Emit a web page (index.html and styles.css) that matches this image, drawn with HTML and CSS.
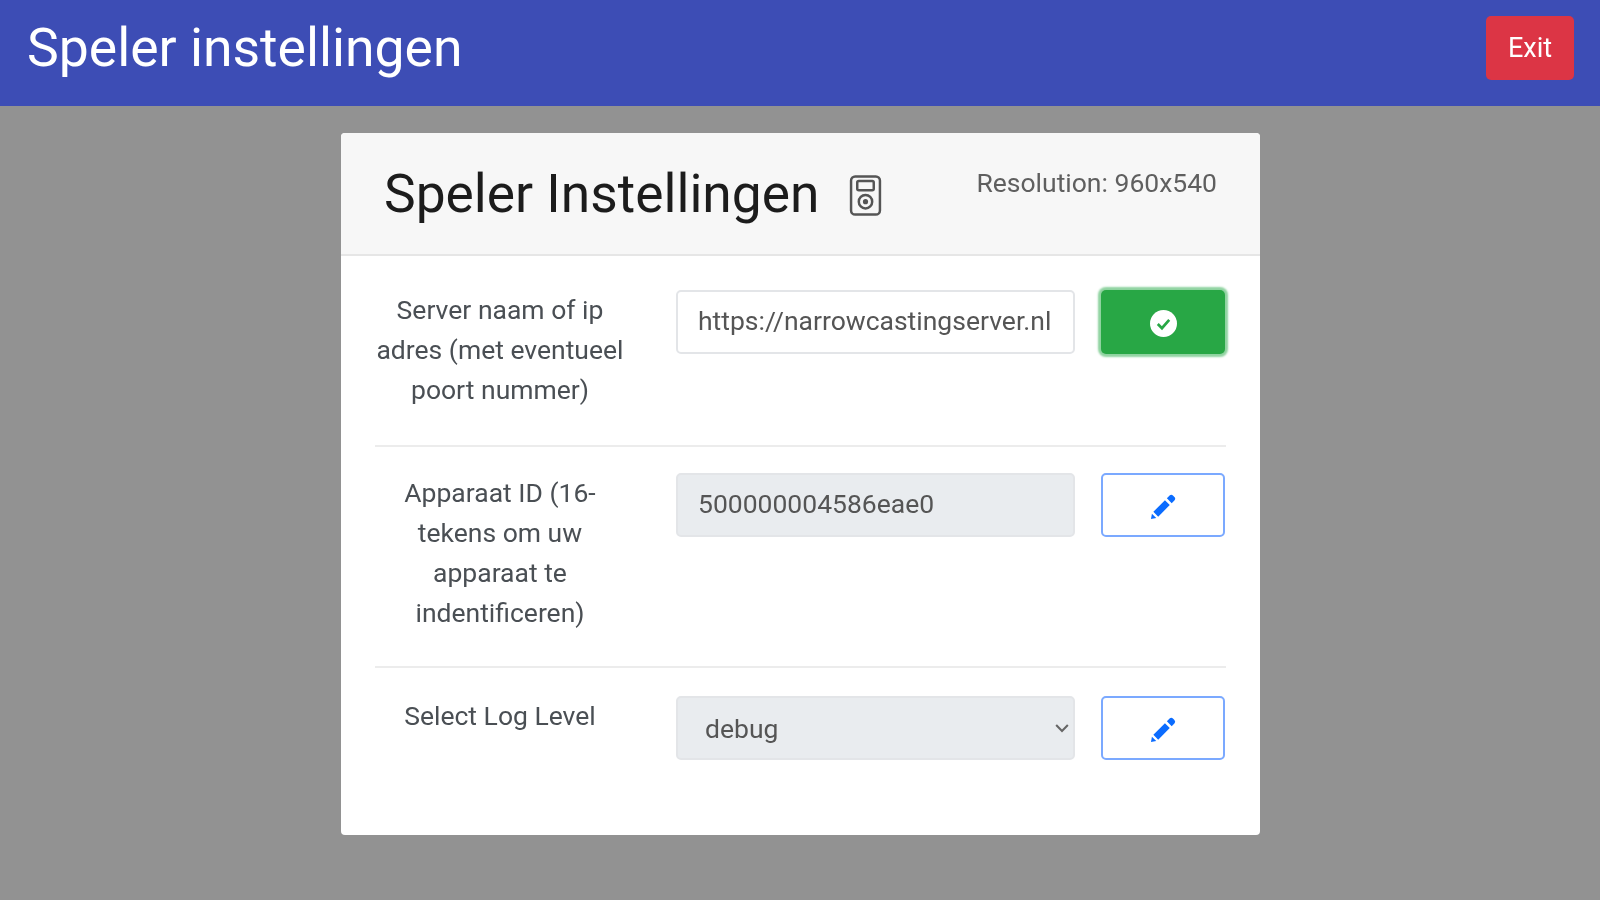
FILE: index.html
```html
<!DOCTYPE html>
<html lang="en">
<head>
    <meta charset="UTF-8">
    <meta name="viewport" content="width=device-width, initial-scale=1.0">
    <title>Speler instellingen</title>
    <link rel="stylesheet" href="styles.css">
</head>
<body>
    <header class="balk">
        <h1 class="balk-titel">Speler instellingen</h1>
        <button class="exit">Exit</button>
    </header>

    <main class="kaart">
        <div class="kaart-kop">
            <h2 class="kaart-titel">Speler Instellingen</h2>
            <svg class="speler-icoon" viewBox="0 0 32 40" fill="none" stroke="#555" stroke-width="2.4">
                <rect x="2" y="1.5" width="28" height="37" rx="4"/>
                <rect x="8" y="6" width="16" height="9" rx="1.5"/>
                <circle cx="16" cy="26" r="6.500"/>
                <circle cx="16" cy="26" r="2.500" fill="#555" stroke="none"/>
            </svg>
            <span class="resolutie">Resolution: 960x540</span>
        </div>

        <div class="rij rij-server">
            <label class="label">Server naam of ip adres (met eventueel poort nummer)</label>
            <input class="veld" type="text" value="https://narrowcastingserver.nl">
            <button class="knop knop-groen">
                <svg class="check" viewBox="0 0 26 26">
                    <circle cx="13" cy="13" r="13" fill="#fff"/>
                    <path d="M7.500 13.500l4 4 7-8" fill="none" stroke="#28a745" stroke-width="2.600"/>
                </svg>
            </button>
        </div>

        <div class="rij rij-apparaat">
            <label class="label">Apparaat ID (16-tekens om uw apparaat te indentificeren)</label>
            <input class="veld" type="text" value="500000004586eae0" disabled>
            <button class="knop knop-rand">
                <svg class="potlood" viewBox="0 0 28 28"><path d="M1 27l1-5.500 4.500 4.500zM3.500 19.500L15.500 7.500l5 5-12 12zM17.500 5.500l2.800-2.800a2.500 2.500 0 0 1 3.500 0l1.500 1.500a2.500 2.500 0 0 1 0 3.500L22.500 10.500z"/></svg>
            </button>
        </div>

        <div class="rij rij-log">
            <label class="label">Select Log Level</label>
            <div class="select-veld">
                <span>debug</span>
                <svg class="pijl" viewBox="0 0 12 8"><path d="M1 1.500l5 5 5-5" fill="none" stroke="#666" stroke-width="1.800"/></svg>
            </div>
            <button class="knop knop-rand">
                <svg class="potlood" viewBox="0 0 28 28"><path d="M1 27l1-5.500 4.500 4.500zM3.500 19.500L15.500 7.500l5 5-12 12zM17.500 5.500l2.800-2.800a2.500 2.500 0 0 1 3.500 0l1.500 1.500a2.500 2.500 0 0 1 0 3.500L22.500 10.500z"/></svg>
            </button>
        </div>
    </main>
</body>
</html>
```

FILE: styles.css
```css
* {
  box-sizing: border-box;
}

body {
  margin: 0;
  height: 900px;
  overflow: hidden;
  background: #929292;
  font-family: Roboto, "Liberation Sans", sans-serif;
  color: #212529;
  filter: blur(0.7px);
}

.balk {
  display: flex;
  justify-content: space-between;
  align-items: center;
  height: 106px;
  padding: 0 26px 11px 27px;
  background: #3d4db5;
}

.balk-titel {
  margin: 0;
  font-size: 53.500px;
  font-weight: 400;
  color: white;
}

.exit {
  width: 88px;
  height: 64px;
  border: 0;
  border-radius: 5px;
  background: #dc3545;
  color: white;
  font-family: inherit;
  font-size: 27px;
}

.kaart {
  width: 919px;
  height: 702px;
  margin: 27px 0 0 341px;
  border-radius: 4px;
  background: white;
}

.kaart-kop {
  display: flex;
  align-items: flex-start;
  height: 123px;
  padding: 0 43px;
  border-bottom: 2px solid #e6e6e6;
  border-radius: 4px 4px 0 0;
  background: #f7f7f7;
}

.kaart-titel {
  margin: 31px 0 0;
  font-size: 53.300px;
  font-weight: 400;
  line-height: 60px;
  color: #1c1c1c;
}

.speler-icoon {
  width: 33px;
  height: 43px;
  margin: 41px 0 0 30px;
}

.resolutie {
  margin: 35px 0 0 auto;
  font-size: 26.500px;
  line-height: 30px;
  color: #5f5f5f;
}

.rij {
  display: grid;
  grid-template-columns: 275px 399px 124px;
  column-gap: 26px;
  align-items: start;
  width: 851px;
  margin: 0 34px;
}

.rij-server {
  height: 191px;
  padding-top: 34px;
  border-bottom: 2px solid #ececec;
}

.rij-apparaat {
  height: 221px;
  padding-top: 26px;
  border-bottom: 2px solid #ececec;
}

.rij-log {
  padding-top: 28px;
}

.label {
  padding-right: 25px;
  font-size: 26.500px;
  line-height: 40px;
  text-align: center;
  color: #4a4f54;
}

.veld,
.select-veld {
  width: 399px;
  height: 64px;
  padding: 0 20px 3px;
  border: 2px solid #e3e5e8;
  border-radius: 5px;
  background: white;
  font-family: inherit;
  font-size: 26.500px;
  color: #555;
}

.veld:disabled,
.select-veld {
  background: #e9ecef;
  color: #555;
}

.select-veld {
  display: flex;
  justify-content: space-between;
  align-items: center;
  padding: 0 4px 0 27px;
}

.pijl {
  width: 14px;
  height: 10px;
}

.knop {
  display: flex;
  justify-content: center;
  align-items: center;
  width: 124px;
  height: 64px;
  padding: 0;
  border-radius: 5px;
}

.knop-groen {
  border: 0;
  background: #28a745;
  box-shadow: 0 0 2px 3px #8fd3a0;
}

.knop-rand {
  border: 2px solid #7ba9ff;
  background: white;
}

.check {
  width: 27px;
  height: 27px;
  margin-top: 3px;
}

.potlood {
  width: 27px;
  height: 27px;
  margin-top: 2px;
  fill: #0b6cff;
}
```
